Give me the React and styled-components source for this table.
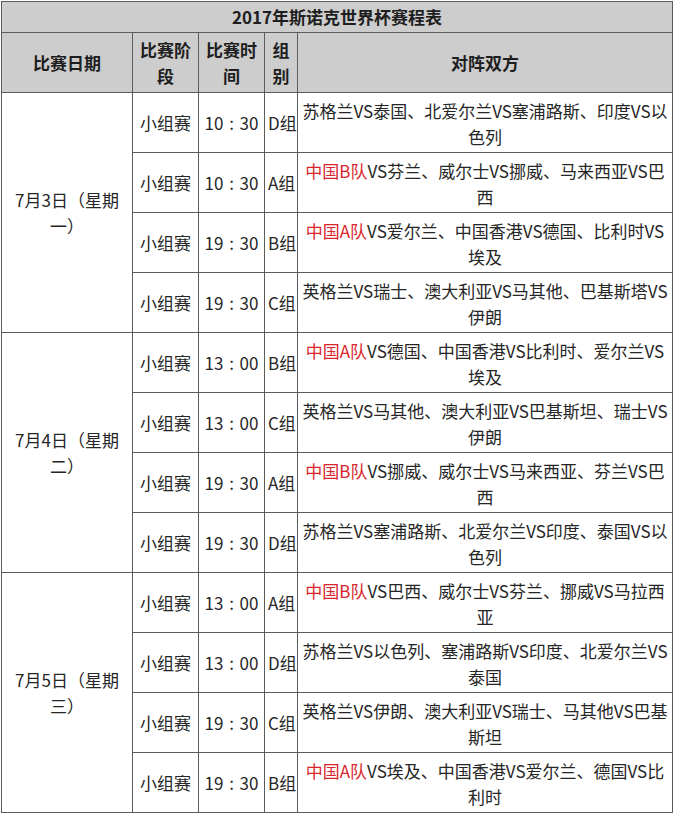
import styled, { createGlobalStyle } from 'styled-components';

const GlobalStyle = createGlobalStyle`
  body {
    margin: 0;
    padding: 1px 0 0 1px;
    background: #ffffff;
    font-family: "Noto Sans CJK SC", "Noto Sans", sans-serif;
  }
`;

const Table = styled.table`
  width: 672px;
  border-collapse: collapse;
  table-layout: fixed;
  color: #262626;
  font-size: 17px;
  line-height: 26px;
`;

const Row = styled.tr`
  height: ${p => p.h || 60}px;
`;

const TitleCell = styled.th`
  padding: 0;
  background: #cdcdcd;
  border: 1px solid #5c5c5c;
  font-weight: bold;
  text-align: center;
  color: #1e1e1e;
`;

const HeadCell = styled.th`
  padding: 2px 4px;
  background: #cdcdcd;
  border: 1px solid #5c5c5c;
  font-weight: bold;
  text-align: center;
  color: #1e1e1e;
`;

const Cell = styled.td`
  padding: ${p => (p.wide ? '5px 1px 0' : '0 3px')};
  border: 1px solid #5c5c5c;
  text-align: center;
  vertical-align: ${p => (p.top ? 'top' : 'middle')};
  white-space: ${p => (p.keep ? 'nowrap' : 'normal')};
`;

const Line = styled.div`
  white-space: nowrap;
`;

const China = styled.span`
  color: #d8262c;
`;

// three-per-em spaces around the colon, as the time is set in the source
const t = (h, m) => `${h}\u2004:\u2004${m}`;

const days = [
  {
    date: ['7月3日（星期', '一）'],
    games: [
      [t(10, 30), 'D组', null, ['苏格兰VS泰国、北爱尔兰VS塞浦路斯、印度VS以', '色列']],
      [t(10, 30), 'A组', '中国B队', ['VS芬兰、威尔士VS挪威、马来西亚VS巴', '西']],
      [t(19, 30), 'B组', '中国A队', ['VS爱尔兰、中国香港VS德国、比利时VS', '埃及']],
      [t(19, 30), 'C组', null, ['英格兰VS瑞士、澳大利亚VS马其他、巴基斯塔VS', '伊朗']],
    ],
  },
  {
    date: ['7月4日（星期', '二）'],
    games: [
      [t(13, '00'), 'B组', '中国A队', ['VS德国、中国香港VS比利时、爱尔兰VS', '埃及']],
      [t(13, '00'), 'C组', null, ['英格兰VS马其他、澳大利亚VS巴基斯坦、瑞士VS', '伊朗']],
      [t(19, 30), 'A组', '中国B队', ['VS挪威、威尔士VS马来西亚、芬兰VS巴', '西']],
      [t(19, 30), 'D组', null, ['苏格兰VS塞浦路斯、北爱尔兰VS印度、泰国VS以', '色列']],
    ],
  },
  {
    date: ['7月5日（星期', '三）'],
    games: [
      [t(13, '00'), 'A组', '中国B队', ['VS巴西、威尔士VS芬兰、挪威VS马拉西', '亚']],
      [t(13, '00'), 'D组', null, ['苏格兰VS以色列、塞浦路斯VS印度、北爱尔兰VS', '泰国']],
      [t(19, 30), 'C组', null, ['英格兰VS伊朗、澳大利亚VS瑞士、马其他VS巴基', '斯坦']],
      [t(19, 30), 'B组', '中国A队', ['VS埃及、中国香港VS爱尔兰、德国VS比', '利时']],
    ],
  },
];

function App() {
  return (
    <>
      <GlobalStyle />
      <Table>
        <colgroup>
          <col style={{ width: 131 }} />
          <col style={{ width: 66 }} />
          <col style={{ width: 66 }} />
          <col style={{ width: 33 }} />
          <col />
        </colgroup>
        <thead>
          <Row h={31}>
            <TitleCell colSpan={5}>2017年斯诺克世界杯赛程表</TitleCell>
          </Row>
          <Row>
            <HeadCell>比赛日期</HeadCell>
            <HeadCell>比赛阶段</HeadCell>
            <HeadCell>比赛时间</HeadCell>
            <HeadCell>组别</HeadCell>
            <HeadCell>对阵双方</HeadCell>
          </Row>
        </thead>
        <tbody>
          {days.map(day =>
            day.games.map(([time, group, team, lines], i) => (
              <Row key={day.date[0] + i}>
                {i === 0 && (
                  <Cell rowSpan={day.games.length}>
                    {day.date.map(l => <Line key={l}>{l}</Line>)}
                  </Cell>
                )}
                <Cell keep>小组赛</Cell>
                <Cell keep>{time}</Cell>
                <Cell keep>{group}</Cell>
                <Cell wide top>
                  <Line>
                    {team && <China>{team}</China>}
                    {lines[0]}
                  </Line>
                  <Line>{lines[1]}</Line>
                </Cell>
              </Row>
            ))
          )}
        </tbody>
      </Table>
    </>
  );
}

export default App;
